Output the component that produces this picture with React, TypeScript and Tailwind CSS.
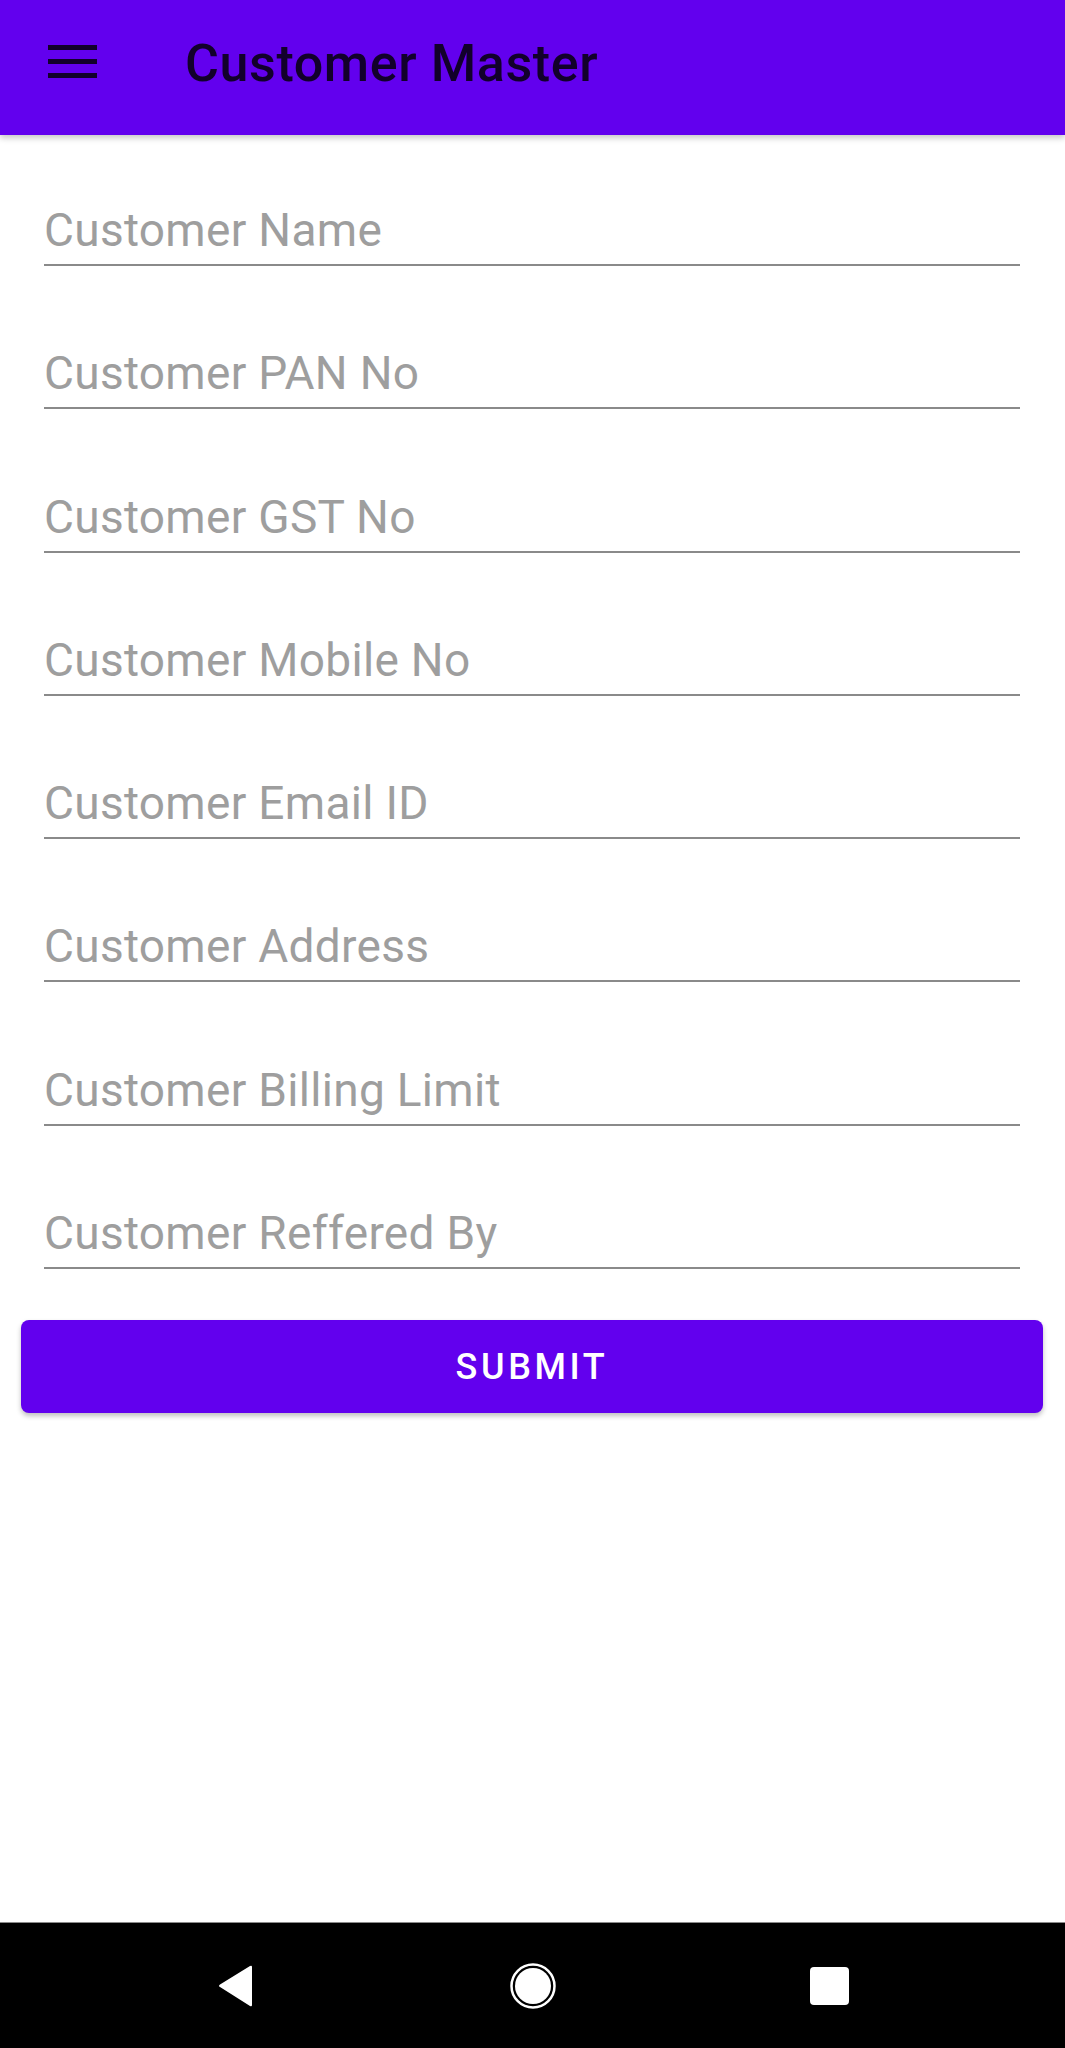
import React from "react";

const fields = [
  "Customer Name",
  "Customer PAN No",
  "Customer GST No",
  "Customer Mobile No",
  "Customer Email ID",
  "Customer Address",
  "Customer Billing Limit",
  "Customer Reffered By",
];

export default function App() {
  return (
    <div
      className="flex flex-col h-[2048px] w-[1065px] bg-white overflow-hidden"
      style={{ fontFamily: "Roboto, 'Noto Sans', sans-serif" }}
    >
      <header className="relative z-10 flex items-start h-[135px] shrink-0 bg-[#6200ee] pl-[48px] shadow-[0_3px_6px_rgba(0,0,0,0.22)]">
        <svg width="49" height="33" viewBox="0 0 49 33" className="mt-[45px] shrink-0">
          <rect x="0" y="0" width="49" height="5" fill="#12002b" />
          <rect x="0" y="14" width="49" height="5" fill="#12002b" />
          <rect x="0" y="28" width="49" height="5" fill="#12002b" />
        </svg>
        <h1 className="ml-[88px] mt-[34px] text-[52px] leading-[59px] tracking-[0.6px] font-medium text-[#12002b]">
          Customer Master
        </h1>
      </header>

      <main className="flex flex-col pt-[69px]">
        <div className="flex flex-col gap-[81.3px] pl-[44px] pr-[45px]">
          {fields.map((f) => (
            <div key={f} className="flex flex-col">
              <div className="text-[46px] leading-[52px] h-[52px] tracking-[0.3px] text-[#9e9e9e] whitespace-nowrap">
                {f}
              </div>
              <div className="mt-[8px] h-[2px] bg-[#8a8a8a]" />
            </div>
          ))}
        </div>

        <div className="pl-[21px] pr-[22px] pt-[51px]">
          <button className="w-full h-[93px] rounded-[8px] bg-[#6200ee] text-white text-[36px] font-medium tracking-[0.1em] shadow-[0_3px_5px_rgba(0,0,0,0.25)]">
            SUBMIT
          </button>
        </div>
      </main>

      <div className="flex-1" />

      <nav className="h-[126px] shrink-0 bg-black border-t border-[#8a8a8a] flex items-center justify-center">
        <div className="w-[297px] flex justify-center">
          <svg width="36" height="42" viewBox="0 0 36 42">
            <path
              d="M34 2 L34 40 Q34 42 32 41 L2 22 Q0 21 2 19.5 L32 1 Q34 0 34 2 Z"
              fill="white"
            />
          </svg>
        </div>
        <div className="w-[297px] flex justify-center">
          <svg width="46" height="46" viewBox="0 0 46 46">
            <circle cx="23" cy="23" r="21.5" fill="none" stroke="white" strokeWidth="2.5" />
            <circle cx="23" cy="23" r="18" fill="white" />
          </svg>
        </div>
        <div className="w-[297px] flex justify-center">
          <svg width="39" height="38" viewBox="0 0 39 38">
            <rect x="0" y="0" width="39" height="38" rx="4" fill="white" />
          </svg>
        </div>
      </nav>
    </div>
  );
}
